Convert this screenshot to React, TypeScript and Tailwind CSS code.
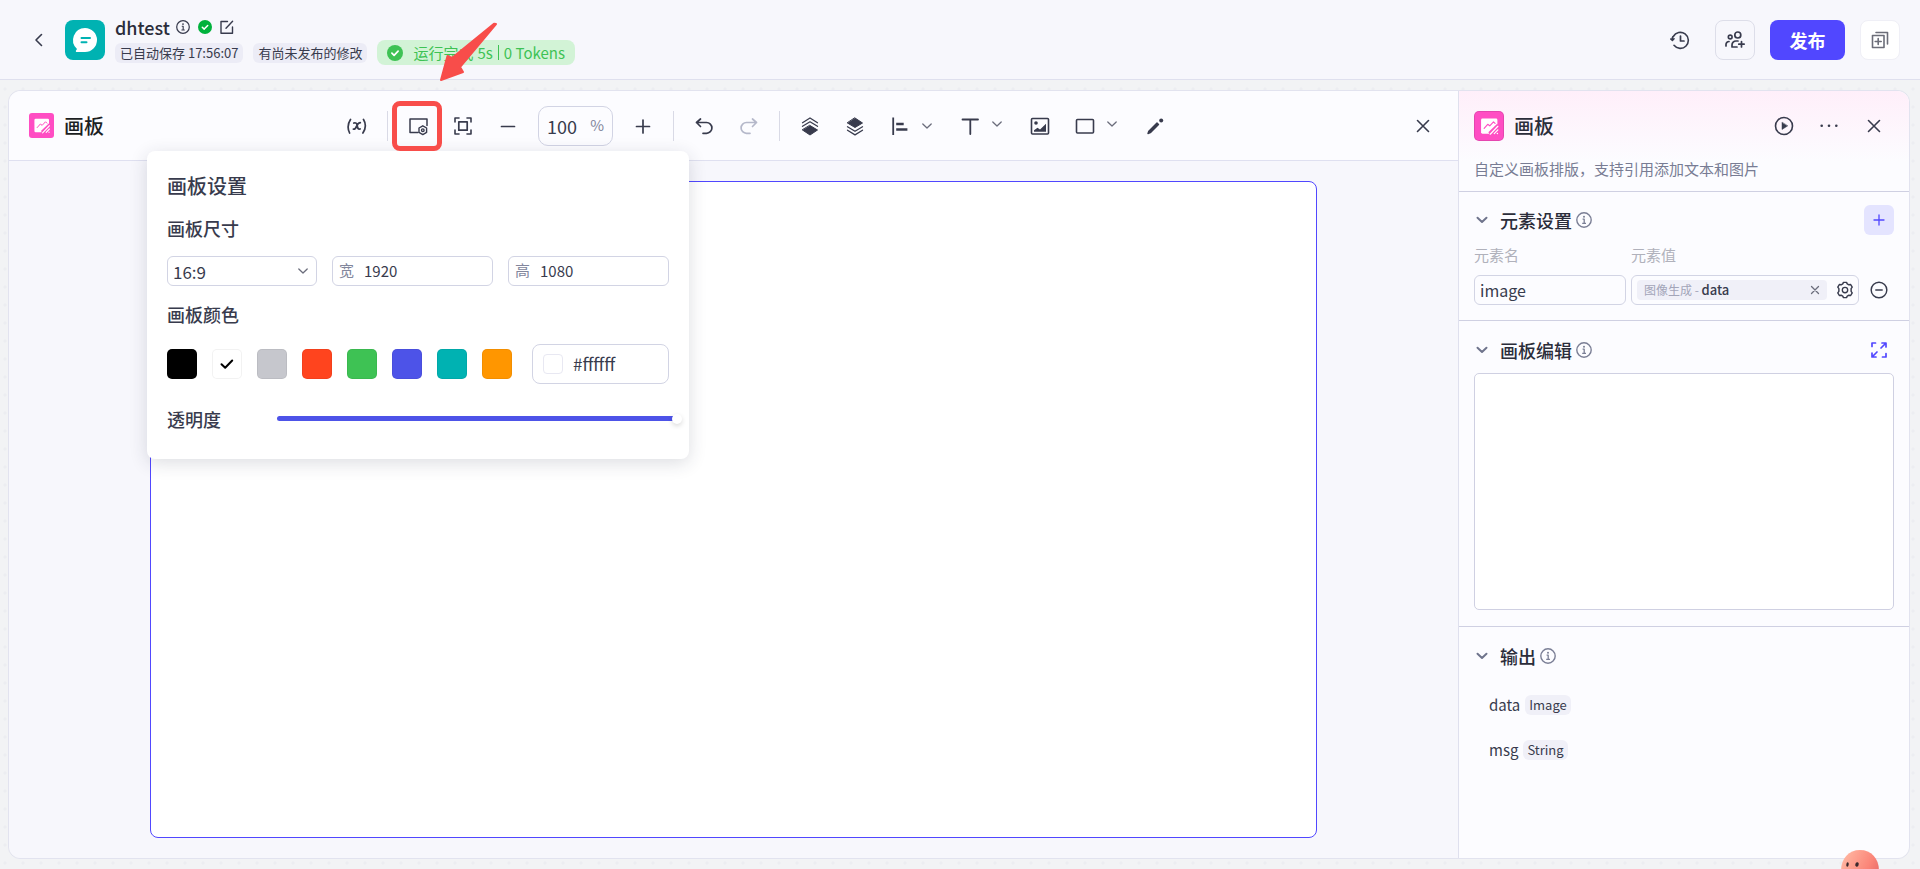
import React from "react";

type IconProps = { children: React.ReactNode; size?: string; box?: string; className?: string };

function Icon({ children, size = "size-5", box = "0 0 20 20", className = "" }: IconProps) {
  return (
    <svg
      viewBox={box}
      className={`${size} shrink-0 ${className}`}
      fill="none"
      stroke="currentColor"
      strokeWidth="1.5"
      strokeLinecap="round"
      strokeLinejoin="round"
      aria-hidden="true"
    >
      {children}
    </svg>
  );
}

function IconButton({ label, children, className = "" }: { label: string; children: React.ReactNode; className?: string }) {
  return (
    <button type="button" aria-label={label} className={`flex size-[30px] shrink-0 items-center justify-center rounded-md ${className}`}>
      {children}
    </button>
  );
}

function InfoIcon({ size = "size-4" }: { size?: string }) {
  return (
    <Icon size={size} box="0 0 16 16">
      <circle cx="8" cy="8" r="7.2" strokeWidth="1.4" />
      <path d="M6.6 7.2h1.6v4M6.2 11.4h3.8" strokeWidth="1.3" strokeLinecap="butt" />
      <circle cx="8" cy="4.7" r="1" fill="currentColor" stroke="none" />
    </Icon>
  );
}

function CheckBadge({ size }: { size: string }) {
  return (
    <Icon size={size} box="0 0 16 16">
      <circle cx="8" cy="8" r="8" fill="currentColor" stroke="none" />
      <path d="M4.9 8.2l2.2 2.2 4-4.2" stroke="#fff" strokeWidth="1.7" />
    </Icon>
  );
}

function CloseIcon() {
  return (
    <Icon size="size-5">
      <path d="M4.5 4.5l11 11M15.5 4.5l-11 11" strokeWidth="1.6" />
    </Icon>
  );
}

function Chevron({ className = "" }: { className?: string }) {
  return (
    <Icon size="size-3" box="0 0 12 12" className={className}>
      <path d="M1.8 4l4.2 4 4.2-4" strokeWidth="1.3" />
    </Icon>
  );
}

function BoardLogo({ size, rounded }: { size: string; rounded: string }) {
  return (
    <svg viewBox="0 0 30 30" className={`${size} ${rounded} shrink-0 bg-[#ff4dc3]`} aria-hidden="true">
      <path d="M8 7h14.500a1.500 1.500 0 0 1 1.500 1.500v5L15 23.200H8a1.500 1.500 0 0 1-1.500-1.500V8.500A1.500 1.500 0 0 1 8 7z" fill="#fff" />
      <path d="M9.800 17.500l3.800-4.300 2.200 1.600 4-4.300 1.700 1.700" fill="none" stroke="#ff4dc3" strokeWidth="1.200" strokeLinecap="round" strokeLinejoin="round" />
      <path d="M15.500 23l9.500-9" fill="none" stroke="#ff4dc3" strokeWidth="3.600" />
      <path d="M16.300 23.800l8.200-8.500M20.600 23.200l3.900-4" fill="none" stroke="#fff" strokeWidth="1.300" strokeLinecap="round" />
      <circle cx="24" cy="23" r="0.800" fill="#fff" />
    </svg>
  );
}

function Divider() {
  return <span className="h-[30px] w-px shrink-0 bg-[#d9dae6]" />;
}

function DropTool({ label, children, raised = false }: { label: string; children: React.ReactNode; raised?: boolean }) {
  return (
    <button type="button" aria-label={label} className="flex h-[30px] w-[55px] shrink-0 items-center">
      <span className="flex w-[30px] justify-center">{children}</span>
      <span className={`flex w-6 justify-center text-[#6b6d7c] ${raised ? "pb-1" : ""}`}>
        <Chevron />
      </span>
    </button>
  );
}

function Header() {
  return (
    <header className="flex h-20 items-center justify-between border-b border-[#dfe0ee] bg-[#f7f7fc] px-5">
      <div className="flex items-center">
        <button type="button" aria-label="返回" className="flex w-[38px] justify-center">
          <Icon size="size-4" box="0 0 16 16">
            <path d="M10.500 2.500L5 8l5.500 5.500" strokeWidth="1.600" />
          </Icon>
        </button>
        <svg viewBox="0 0 40 40" className="ml-[7px] size-10 rounded-lg bg-[#00b2b2]" aria-hidden="true">
          <path d="M20 8a12 12 0 1 1 0 24h-8.200a1 1 0 0 1-.8-1.600l1-1.500A12 12 0 0 1 20 8z" fill="#fff" />
          <path d="M16.500 18h8.500M16.500 22.300h5" stroke="#00b2b2" strokeWidth="2" strokeLinecap="round" />
        </svg>
        <div className="ml-[10px] flex flex-col">
          <div className="flex h-[26px] items-center">
            <h1 className="text-[18px] font-medium leading-6 text-[#2b2d3a]">dhtest</h1>
            <span className="ml-[6px] flex items-center gap-2">
              <InfoIcon size="size-[14px]" />
              <span className="text-[#00b23c]"><CheckBadge size="size-[14px]" /></span>
              <button type="button" aria-label="编辑">
                <Icon size="size-[14px]" box="0 0 14 14">
                  <path d="M7.500 1.500H1v11.700h11.500V7M6 8.300L12.600 1.200" strokeWidth="1.400" />
                </Icon>
              </button>
            </span>
          </div>
          <div className="flex h-[25px] items-center gap-[10px]">
            <span className="rounded-md bg-[#ececf6] px-[5px] text-[13px] leading-5">已自动保存 17:56:07</span>
            <span className="rounded-md bg-[#ececf6] px-[5px] text-[13px] leading-5">有尚未发布的修改</span>
            <span className="flex h-[25px] items-center rounded-lg bg-[#d2f3d6] px-[10px] text-[15px] leading-5 text-[#3ec254]">
              <CheckBadge size="size-4" />
              <span className="ml-[10px]">运行完成</span>
              <span className="ml-1">5s</span>
              <span className="mx-[5px] h-[15px] w-px bg-[#3ec254]" />
              <span>0 Tokens</span>
            </span>
          </div>
        </div>
      </div>
      <div className="flex items-center gap-[15px]">
        <button type="button" aria-label="历史" className="flex size-10 items-center justify-center">
          <Icon>
            <path d="M3.300 6.500A8 8 0 1 1 4 15.300M2 9.800a8 8 0 0 1 1-3.300M.800 9l1.600 1.400L4 8.800" strokeWidth="1.600" />
            <path d="M10.500 6v5h3.500" strokeWidth="1.700" />
          </Icon>
        </button>
        <button type="button" aria-label="协作" className="flex size-10 items-center justify-center rounded-lg border border-[#dddee9]">
          <Icon>
            <circle cx="12.800" cy="5" r="3" strokeWidth="1.700" />
            <circle cx="5.200" cy="7" r="1.900" strokeWidth="1.600" />
            <path d="M1 16v-1.500a3 3 0 0 1 3-3M13 11h-2a4 4 0 0 0-4 4v2h5M16.500 11.500v5.500M13.800 14.200h5.400" strokeWidth="1.700" />
          </Icon>
        </button>
        <button type="button" className="h-10 w-[75px] rounded-lg bg-[#5147ff] text-[18px] font-bold leading-6 text-white">发布</button>
        <button type="button" aria-label="新建副本" className="flex size-10 items-center justify-center rounded-lg border border-[#efeff6] bg-white text-[#6b6d78]">
          <Icon>
            <path d="M2.500 5.500h11.500v12H2.500zM6 2.500h11.500V14M8.200 8.500v6M5.200 11.500h6" strokeWidth="1.600" />
          </Icon>
        </button>
      </div>
    </header>
  );
}

const swatches = [
  { name: "black", cls: "bg-black" },
  { name: "white", cls: "bg-white border-[#e8e8f2]" },
  { name: "gray", cls: "bg-[#c6c7cd]" },
  { name: "red", cls: "bg-[#ff441e]" },
  { name: "green", cls: "bg-[#3ec254]" },
  { name: "blue", cls: "bg-[#4d53e8]" },
  { name: "teal", cls: "bg-[#00b2b2]" },
  { name: "orange", cls: "bg-[#ff9600]" },
];

function SizeField({ label, value }: { label: string; value: string }) {
  return (
    <label className="flex h-[30px] items-center gap-[10px] rounded-md border border-[#d2d4e4] px-[6px] text-[15px]">
      <span className="text-[#82869c]">{label}</span>
      <input defaultValue={value} className="w-full min-w-0 pt-0.5 outline-none" />
    </label>
  );
}

function SettingsPopover() {
  return (
    <div role="dialog" aria-label="画板设置" className="absolute left-[-256px] top-10 z-10 flex w-[542px] flex-col rounded-lg bg-white px-5 pb-[25px] pt-5 text-left shadow-[0_4px_18px_rgba(40,42,70,0.16)]">
      <h2 className="text-[20px] font-medium leading-[30px]">画板设置</h2>
      <h3 className="mt-[15px] text-[18px] font-medium leading-6">画板尺寸</h3>
      <div className="mt-4 grid grid-cols-[150px_1fr_1fr] gap-[15px]">
        <div className="relative">
          <select aria-label="画板尺寸" defaultValue="16:9" className="h-[30px] w-full appearance-none rounded-md border border-[#d2d4e4] bg-white pl-[5px] pt-0.5 text-[17px] leading-6">
            <option>16:9</option>
            <option>4:3</option>
          </select>
          <Chevron className="pointer-events-none absolute right-2 top-[9px] text-[#6b6d7c]" />
        </div>
        <SizeField label="宽" value="1920" />
        <SizeField label="高" value="1080" />
      </div>
      <h3 className="mt-4 text-[18px] font-medium leading-6">画板颜色</h3>
      <div className="mt-[18px] flex items-center justify-between">
        <div className="flex gap-[15px]">
          {swatches.map((s) => (
            <button key={s.name} type="button" aria-label={s.name} className={`flex size-[30px] items-center justify-center rounded-[5px] border border-black/5 text-black ${s.cls}`}>
              {s.name === "white" && (
                <Icon size="size-[14px]" box="0 0 14 14">
                  <path d="M1.500 7.300l3.700 3.500 7-7.300" strokeWidth="2" />
                </Icon>
              )}
            </button>
          ))}
        </div>
        <label className="flex h-10 w-[137px] items-center gap-[10px] rounded-lg border border-[#d2d4e4] px-[10px] text-[17px]">
          <span className="size-5 shrink-0 rounded border border-[#e8e8f2] bg-white" />
          <input aria-label="颜色值" defaultValue="#ffffff" className="w-full min-w-0 outline-none" />
        </label>
      </div>
      <label className="mt-5 flex h-[30px] items-center justify-between text-[18px] font-medium leading-6">
        透明度
        <input
          type="range"
          defaultValue="100"
          className="-mr-[13px] h-3 w-[405px] appearance-none bg-transparent [&::-webkit-slider-runnable-track]:h-[5px] [&::-webkit-slider-runnable-track]:rounded-full [&::-webkit-slider-runnable-track]:bg-[linear-gradient(90deg,#4d53e8_398px,transparent_398px)] [&::-webkit-slider-thumb]:-mt-[2px] [&::-webkit-slider-thumb]:size-[10px] [&::-webkit-slider-thumb]:appearance-none [&::-webkit-slider-thumb]:rounded-full [&::-webkit-slider-thumb]:bg-white [&::-webkit-slider-thumb]:shadow-[0_2px_5px_rgba(0,0,0,0.15)]"
        />
      </label>
    </div>
  );
}

function BoardSettingsTool() {
  return (
    <div className="relative z-10 size-[30px]">
      <IconButton label="画板设置">
        <Icon>
          <path d="M10 16.500H2V3h17v6.500" strokeWidth="1.500" />
          <path d="M14.800 9.800l3.800 2.200v4.400l-3.800 2.200-3.800-2.200V12z" strokeWidth="1.400" />
          <circle cx="14.800" cy="14.200" r="1.300" strokeWidth="1.400" />
        </Icon>
      </IconButton>
      <SettingsPopover />
      <span className="pointer-events-none absolute left-[-11px] top-[-10px] z-20 size-[50px] rounded-lg border-[5px] border-[#f84d4a]" />
      <svg viewBox="0 0 60 62" className="pointer-events-none absolute left-[35px] top-[-90px] z-20 h-[62px] w-[60px]" aria-hidden="true">
        <path d="M58 3l-2-.200L14 37l-4.500-2L3 59l22-8-3-5z" fill="#f84d4a" stroke="#f84d4a" strokeWidth="2" strokeLinejoin="round" />
      </svg>
    </div>
  );
}

function Toolbar() {
  return (
    <div className="flex h-[70px] items-center justify-between border-b border-[#dfe0f0] rounded-tl-xl bg-[#fcfcff] px-5">
      <div className="flex items-center gap-[10px]">
        <BoardLogo size="size-[25px]" rounded="rounded-[3px]" />
        <h2 className="text-[20px] font-medium leading-[30px] text-[#1c1f23]">画板</h2>
      </div>
      <div className="flex items-center gap-[15px]">
        <IconButton label="变量">
          <Icon>
            <path d="M3.500 3.500Q-.8 10 2.600 17M16.500 3.500q4 6.500-.6 13.500" strokeWidth="1.700" />
            <path d="M6.800 7c2-.6 3 .2 3.300 2.200.4 2.900 1 4.300 3 3.800M13.300 6.700c-1.600 0-2.600 1-3.500 3.100-.8 2-1.800 3.400-3.400 3.300" strokeWidth="1.800" />
          </Icon>
        </IconButton>
        <Divider />
        <BoardSettingsTool />
        <IconButton label="适应画布">
          <Icon>
            <path d="M2 6V2h4M14 2h4v4M18 14v4h-4M6 18H2v-4" strokeWidth="1.600" />
            <path d="M5.800 5.800h8.400v8.400H5.800z" strokeWidth="1.700" />
          </Icon>
        </IconButton>
        <IconButton label="缩小">
          <Icon><path d="M3.500 10.500h13" strokeWidth="1.700" /></Icon>
        </IconButton>
        <label className="flex h-10 w-[75px] items-center justify-between rounded-[10px] border border-[#d2d4e4] px-2">
          <input aria-label="缩放" defaultValue="100" className="w-8 bg-transparent text-[18px] leading-6 outline-none" />
          <span className="text-[15px] text-[#82869c]">%</span>
        </label>
        <IconButton label="放大">
          <Icon><path d="M3.500 10.500h13M10 4v13" strokeWidth="1.700" /></Icon>
        </IconButton>
        <Divider />
        <IconButton label="撤销">
          <Icon><path d="M6.500 3L2.500 6.500l4 4M2.500 6.500h10a5.300 5.300 0 0 1 0 10.800H9" strokeWidth="1.700" /></Icon>
        </IconButton>
        <IconButton label="重做" className="text-[#b5b8ca]">
          <Icon><path d="M13.500 3l4 3.500-4 4M17.500 6.500h-10a5.300 5.300 0 0 0 0 10.800H11" strokeWidth="1.700" /></Icon>
        </IconButton>
        <Divider />
        <IconButton label="置顶">
          <Icon>
            <path d="M10 9.500l7.500 4.500-7.500 5-7.500-5z" fill="currentColor" strokeWidth="1" />
            <path d="M2.500 10.300L10 5.800l7.500 4.500M2.500 6.700L10 2l7.500 4.700" strokeWidth="1.300" />
          </Icon>
        </IconButton>
        <IconButton label="置底">
          <Icon>
            <path d="M10 2l7.500 5-7.500 4.500L2.500 7z" fill="currentColor" strokeWidth="1" />
            <path d="M2.500 10.800L10 15.300l7.500-4.500M2.500 14.200l7.500 4.700 7.500-4.700" strokeWidth="1.300" />
          </Icon>
        </IconButton>
        <DropTool label="对齐">
          <Icon>
            <path d="M3.200 1.500v17.500" strokeWidth="1.800" strokeLinecap="butt" />
            <path d="M6.200 8h7.500M6.200 13.500h11.200" strokeWidth="2.600" strokeLinecap="butt" />
          </Icon>
        </DropTool>
        <DropTool label="文本" raised>
          <Icon><path d="M2.500 3.500h15.500M10.300 3.500v14.500" strokeWidth="1.800" /></Icon>
        </DropTool>
        <IconButton label="图片">
          <Icon>
            <rect x="1.500" y="2.500" width="17" height="15.500" rx="1" strokeWidth="1.600" />
            <circle cx="6" cy="7" r="1.800" fill="currentColor" stroke="none" />
            <path d="M4 15.800v-1.600l3.500-2.500 2.500 1.800 6-5.800v8.100z" fill="currentColor" stroke="none" />
          </Icon>
        </IconButton>
        <DropTool label="矩形" raised>
          <Icon><rect x="1.500" y="3.500" width="17" height="13.500" rx="1" strokeWidth="1.600" /></Icon>
        </DropTool>
        <IconButton label="画笔">
          <Icon>
            <path d="M3 17.500l.8-2.300L12 7l1.500 1.500-8.200 8.200z" fill="currentColor" strokeWidth="1.400" />
            <circle cx="16.200" cy="4.500" r="2" fill="currentColor" stroke="none" />
          </Icon>
        </IconButton>
      </div>
      <IconButton label="关闭"><CloseIcon /></IconButton>
    </div>
  );
}

function SectionTitle({ title, action }: { title: string; action?: React.ReactNode }) {
  return (
    <div className="flex h-[30px] items-center">
      <button type="button" className="flex items-center gap-[10px] text-[#6f748c]">
        <Icon size="size-4" box="0 0 16 16"><path d="M3.500 5.800L8 10l4.500-4.200" strokeWidth="2" /></Icon>
        <span className="text-[18px] font-medium leading-6 text-[#2b2d3a]">{title}</span>
      </button>
      <span className="ml-1 flex-1 text-[#7b7f96]"><InfoIcon /></span>
      {action}
    </div>
  );
}

function OutputRow({ name, type }: { name: string; type: string }) {
  return (
    <li className="flex h-[45px] items-center gap-[5px] text-[15px] leading-5">
      {name}
      <span className="rounded-md bg-[#f0f0f8] px-1 text-[13px] leading-5">{type}</span>
    </li>
  );
}

function SidePanel() {
  return (
    <aside className="flex w-[451px] shrink-0 flex-col rounded-r-xl border-l border-[#dfe0ee] bg-[#fcfcff]">
      <div className="flex h-[101px] flex-col rounded-tr-xl border-b border-[#cfd0e2] bg-[linear-gradient(#ffeffa,#fcfcff_70px)] pl-[15px] pr-5 pt-5">
        <div className="flex items-center gap-[10px]">
          <BoardLogo size="size-[30px]" rounded="rounded-[5px] border border-black/10" />
          <h2 className="flex-1 text-[20px] font-medium leading-[30px] text-[#2b2d3a]">画板</h2>
          <div className="flex gap-[15px]">
            <IconButton label="运行">
              <Icon>
                <circle cx="10" cy="10" r="8.500" strokeWidth="1.600" />
                <path d="M8 6.500v7l5.500-3.500z" fill="currentColor" strokeWidth="0.500" />
              </Icon>
            </IconButton>
            <IconButton label="更多">
              <Icon>
                <g fill="currentColor" stroke="none">
                  <circle cx="2.700" cy="9.800" r="1.300" />
                  <circle cx="10" cy="9.800" r="1.300" />
                  <circle cx="17.300" cy="9.800" r="1.300" />
                </g>
              </Icon>
            </IconButton>
            <IconButton label="关闭面板"><CloseIcon /></IconButton>
          </div>
        </div>
        <p className="mt-[18px] text-[15px] leading-5 text-[#787c94]">自定义画板排版，支持引用添加文本和图片</p>
      </div>

      <section className="border-b border-[#cfd0e2] px-[15px] pb-[15px] pt-[13px]">
        <SectionTitle
          title="元素设置"
          action={
            <IconButton label="添加元素" className="bg-[#e4e4ff] text-[#5147ff]">
              <Icon size="size-3" box="0 0 12 12"><path d="M1 6h10M6 1v10" strokeWidth="1.300" /></Icon>
            </IconButton>
          }
        />
        <div className="mt-[10px] grid grid-cols-[152px_228px_30px] gap-x-[5px] text-[15px] leading-5">
          <label htmlFor="element-name" className="text-[#b0b1bb]">元素名</label>
          <span className="col-span-2 text-[#b0b1bb]">元素值</span>
          <input id="element-name" defaultValue="image" className="mt-[10px] h-[30px] w-full rounded-md border border-[#d2d4e4] bg-transparent px-[5px] text-[16px] outline-none" />
          <div className="mt-[10px] flex h-[30px] items-center rounded-md border border-[#d2d4e4] pl-[5px] pr-1">
            <span className="flex h-5 flex-1 items-center rounded bg-[#f0f0f8] px-[7px] text-[12px]">
              <span className="text-[#a3a5b8]">图像生成 -&nbsp;</span>
              <span className="flex-1 text-[13px] font-medium">data</span>
              <button type="button" aria-label="清除" className="text-[#6b6d7c]">
                <Icon size="size-[10px]" box="0 0 10 10"><path d="M1.500 1.500l7 7M8.500 1.500l-7 7" strokeWidth="1.300" /></Icon>
              </button>
            </span>
            <button type="button" aria-label="引用设置" className="ml-[9px]">
              <Icon size="size-[18px]">
                <path d="M7.500 3.200L8.300 1.500h3.400l.8 1.700 1.800 1 2-.3 1.700 2.900L16.800 8.500v3l1.200 1.700-1.700 2.900-2-.3-1.800 1-.8 1.700H8.300l-.8-1.700-1.800-1-2 .3L2 13.200l1.200-1.700v-3L2 6.800l1.700-2.900 2 .3z" strokeWidth="1.600" />
                <circle cx="10" cy="10" r="3" />
              </Icon>
            </button>
          </div>
          <button type="button" aria-label="删除元素" className="mt-[10px] flex h-[30px] items-center justify-center">
            <Icon size="size-[18px]">
              <circle cx="10" cy="10" r="8.700" strokeWidth="1.600" />
              <path d="M6.500 10h7" strokeWidth="1.700" />
            </Icon>
          </button>
        </div>
      </section>

      <section className="border-b border-[#cfd0e2] px-[15px] pb-4 pt-[14px]">
        <SectionTitle
          title="画板编辑"
          action={
            <IconButton label="全屏" className="text-[#5147ff]">
              <Icon size="size-4" box="0 0 16 16">
                <path d="M1 4.500V1h3.500M11 1h4v4M15 11.500V15h-3.500M5 15H1v-4M10 6l4.500-4.500M1.500 14.500L6 10" strokeWidth="1.700" />
              </Icon>
            </IconButton>
          }
        />
        <textarea aria-label="画板编辑" className="mt-2 block h-[237px] w-full resize-none rounded-[5px] border border-[#cfd0e2] bg-white" />
      </section>

      <section className="px-[15px] pt-[14px]">
        <SectionTitle title="输出" />
        <ul className="mt-[11px] pl-[15px]">
          <OutputRow name="data" type="Image" />
          <OutputRow name="msg" type="String" />
        </ul>
      </section>
    </aside>
  );
}

function Mascot() {
  return (
    <svg viewBox="0 0 38 42" className="fixed -bottom-[23px] right-[41px] h-[42px] w-[38px]" aria-hidden="true">
      <defs>
        <linearGradient id="skin" x1="0" y1="0" x2="1" y2="0.600">
          <stop offset="0.150" stopColor="#ffb29e" />
          <stop offset="0.700" stopColor="#fb8578" />
          <stop offset="1" stopColor="#e76a68" />
        </linearGradient>
      </defs>
      <path d="M0 21C0 8 8 0 19 0s19 8 19 21v21H0z" fill="url(#skin)" />
      <ellipse cx="6.500" cy="14.500" rx="1.200" ry="2.200" fill="#3b2a2d" transform="rotate(10 6.500 14.500)" />
      <ellipse cx="16" cy="14.500" rx="1.700" ry="2.200" fill="#3b2a2d" transform="rotate(15 16 14.500)" />
    </svg>
  );
}

export default function App() {
  return (
    <div className="flex min-h-screen flex-col overflow-hidden bg-[#f2f3f5] font-['Noto_Sans_CJK_SC',sans-serif] text-[#383b4d]">
      <Header />
      <main className="flex flex-1 bg-[radial-gradient(circle_at_center,#ecedf1_1px,transparent_2px)] bg-size-[18px_18px] bg-position-[-4px_0px] pb-[10px] pl-2 pr-[10px] pt-[10px]">
        <div className="flex flex-1 rounded-xl border border-[#e2e3ef]">
          <div className="flex min-w-0 flex-1 flex-col rounded-l-xl bg-[#f7f7fc]">
            <Toolbar />
            <div className="flex flex-1 px-[141px] py-5">
              <div className="flex-1 rounded-lg border border-[#5147ff] bg-white" />
            </div>
          </div>
          <SidePanel />
        </div>
      </main>
      <Mascot />
    </div>
  );
}
